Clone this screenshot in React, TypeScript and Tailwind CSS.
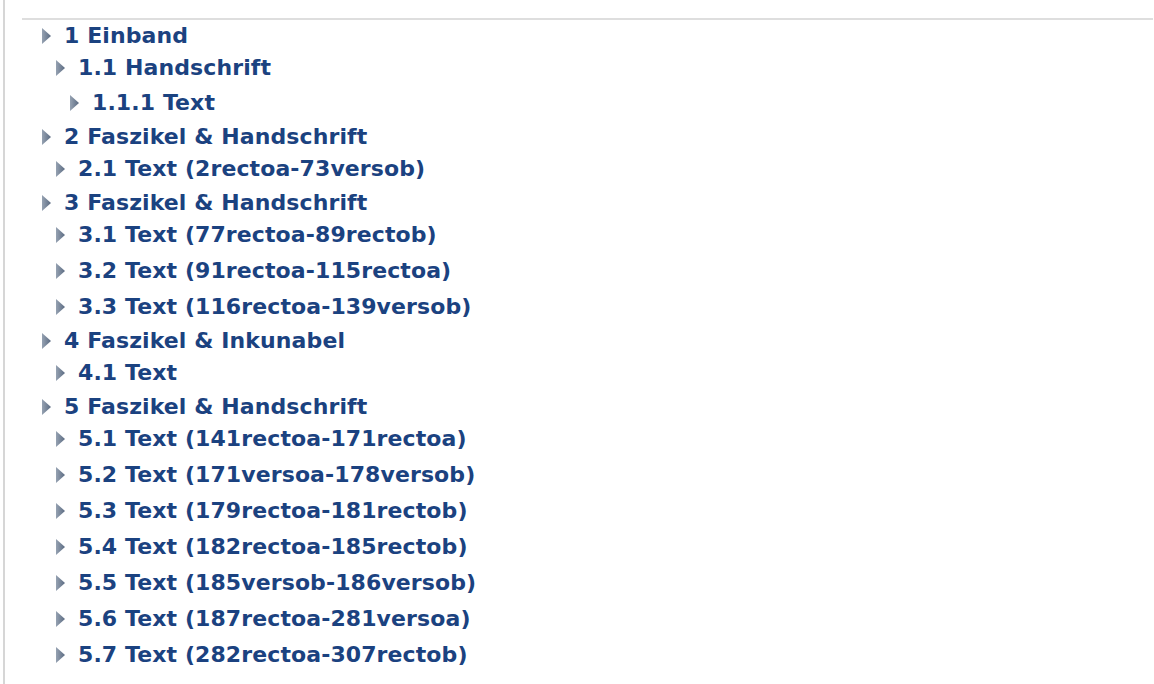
import React from "react";

type Node = { label: string; children?: Node[] };

const tree: Node[] = [
  { label: "1 Einband", children: [{ label: "1.1 Handschrift", children: [{ label: "1.1.1 Text" }] }] },
  { label: "2 Faszikel & Handschrift", children: [{ label: "2.1 Text (2rectoa-73versob)" }] },
  {
    label: "3 Faszikel & Handschrift",
    children: [
      { label: "3.1 Text (77rectoa-89rectob)" },
      { label: "3.2 Text (91rectoa-115rectoa)" },
      { label: "3.3 Text (116rectoa-139versob)" },
    ],
  },
  { label: "4 Faszikel & Inkunabel", children: [{ label: "4.1 Text" }] },
  {
    label: "5 Faszikel & Handschrift",
    children: [
      { label: "5.1 Text (141rectoa-171rectoa)" },
      { label: "5.2 Text (171versoa-178versob)" },
      { label: "5.3 Text (179rectoa-181rectob)" },
      { label: "5.4 Text (182rectoa-185rectob)" },
      { label: "5.5 Text (185versob-186versob)" },
      { label: "5.6 Text (187rectoa-281versoa)" },
      { label: "5.7 Text (282rectoa-307rectob)" },
    ],
  },
];

function Arrow() {
  return (
    <svg width="9" height="16" viewBox="0 0 9 16" className="shrink-0">
      <defs>
        <linearGradient id="ag" x1="0" y1="0" x2="1" y2="0">
          <stop offset="0" stopColor="#96a2b2" />
          <stop offset="1" stopColor="#5b6b82" />
        </linearGradient>
      </defs>
      <path d="M0 0 L9 8 L0 16 Z" fill="url(#ag)" />
    </svg>
  );
}

function Row({ label }: { label: string }) {
  return (
    <div className="flex h-[32px] items-center">
      <Arrow />
      <span className="ml-[13px] whitespace-nowrap text-[22px] font-bold leading-none tracking-[0.1px] text-[#1b4280]">
        {label}
      </span>
    </div>
  );
}

function Item({ node, level }: { node: Node; level: number }) {
  return (
    <div>
      <Row label={node.label} />
      {node.children && (
        <div className={level === 0 ? "ml-[14px] flex flex-col gap-1" : "ml-[14px] mt-[3px] flex flex-col gap-1"}>
          {node.children.map((c) => (
            <Item key={c.label} node={c} level={level + 1} />
          ))}
        </div>
      )}
    </div>
  );
}

export default function App() {
  return (
    <div
      className="flex h-[684px] w-[1154px] bg-white"
      style={{ fontFamily: '"DejaVu Sans", Verdana, sans-serif' }}
    >
      <div className="ml-[3px] w-[2px] bg-[#d6d6d6]" />
      <div className="ml-[17px] flex-1 pt-[18px]">
        <div className="mr-[1px] h-[2px] bg-[#dedede]" />
        <div className="ml-[20px] flex flex-col gap-[2px]">
          {tree.map((n) => (
            <Item key={n.label} node={n} level={0} />
          ))}
        </div>
      </div>
    </div>
  );
}
